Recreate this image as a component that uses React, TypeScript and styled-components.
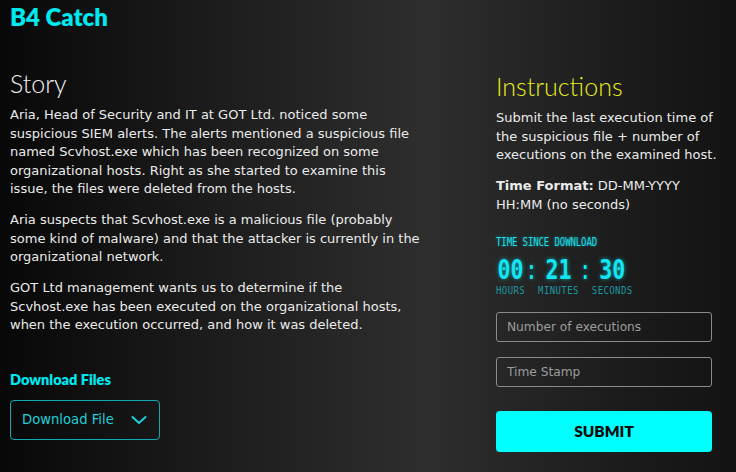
import React from "react";
import styled, { createGlobalStyle } from "styled-components";

const Global = createGlobalStyle`
  html, body { margin: 0; padding: 0; }
  body {
    width: 736px;
    height: 472px;
    overflow: hidden;
    background: linear-gradient(90deg, #080808 0%, #1b1b1b 27%, #2e2e2e 58%, #1c1c1c 84%, #131313 100%);
    font-family: "DejaVu Sans", "Open Sans", sans-serif;
    color: #ececec;
  }
`;

const Page = styled.div`
  box-sizing: border-box;
  width: 736px;
  height: 472px;
  padding: 3px 14px 0 10px;
  display: flex;
  flex-direction: column;
`;

const Title = styled.h1`
  margin: 0;
  font-family: "Lato", sans-serif;
  font-size: 24px;
  line-height: 28px;
  font-weight: 800;
  color: #00e8f0;
`;

const Columns = styled.div`
  display: grid;
  grid-template-columns: 410px 226px;
  justify-content: space-between;
`;

const Left = styled.div`
  display: flex;
  flex-direction: column;
  align-items: flex-start;
  padding-top: 37px;
`;

const Right = styled.div`
  display: flex;
  flex-direction: column;
  align-items: flex-start;
  padding-top: 40px;
`;

const Heading = styled.h2<{ $tone: "white" | "yellow" }>`
  margin: 0 0 8px;
  font-family: "Lato", sans-serif;
  font-weight: 300;
  font-size: 25px;
  line-height: 30px;
  color: ${(p) => (p.$tone === "yellow" ? "#e6ec1c" : "#f2f2f2")};
`;

const Para = styled.p`
  margin: 0 0 12.5px;
  font-family: "DejaVu Sans", sans-serif;
  font-size: 13px;
  line-height: 18.5px;
  color: #ebebeb;
`;

const Strong = styled.b`
  font-weight: 700;
`;

const DownloadLabel = styled.div`
  margin-top: 24px;
  font-family: "Lato", sans-serif;
  font-weight: 800;
  font-size: 14.5px;
  line-height: 18px;
  color: #00e8f0;
`;

const DropButton = styled.button`
  margin-top: 10.5px;
  box-sizing: border-box;
  width: 150px;
  height: 40px;
  display: flex;
  align-items: center;
  justify-content: space-between;
  padding: 0 12px 0 11px;
  background: transparent;
  border: 1px solid #14a9b2;
  border-radius: 4px;
  color: #1fd0da;
  font-family: "DejaVu Sans", sans-serif;
  font-size: 13.2px;
  white-space: nowrap;
`;

const ClockTitle = styled.div`
  margin-top: 9px;
  font-family: "DejaVu Sans Mono", monospace;
  font-size: 9px;
  line-height: 12px;
  letter-spacing: -0.1px;
  color: #1ee0ee;
  text-transform: uppercase;
  transform: scaleY(1.4);
  text-shadow: 0 0 3px rgba(0, 230, 240, 0.5);
`;

const Clock = styled.div`
  margin-top: 12.5px;
  display: flex;
  align-items: flex-start;
`;

const Unit = styled.div`
  display: flex;
  flex-direction: column;
  align-items: center;
`;

const Digits = styled.div`
  font-family: "DejaVu Sans Mono", monospace;
  font-weight: 700;
  font-size: 21.6px;
  line-height: 20px;
  height: 20px;
  color: #13e6f2;
  transform: scaleY(1.27);
  text-shadow: 0 0 4px rgba(0, 230, 240, 0.6);
`;

const Colon = styled(Digits)`
  width: 13px;
  text-align: center;
  font-weight: 400;
`;

const UnitLabel = styled.div`
  margin-top: 4.6px;
  font-family: "DejaVu Sans Mono", monospace;
  font-size: 9px;
  line-height: 10px;
  letter-spacing: 0.4px;
  color: #1c98a1;
  text-transform: uppercase;
  transform: scaleY(1.2);
`;

const Field = styled.input`
  box-sizing: border-box;
  width: 216px;
  height: 30px;
  margin: 17px 0 0;
  padding: 0 10px;
  background: transparent;
  border: 1px solid #8a8a8a;
  border-radius: 3px;
  font-family: "DejaVu Sans", sans-serif;
  font-size: 12.2px;
  color: #ddd;
  outline: none;
  &::placeholder { color: #9c9c9c; }
  & + & { margin-top: 15px; }
`;

const Submit = styled.button`
  margin-top: 24px;
  width: 216px;
  height: 41px;
  border: none;
  border-radius: 4px;
  background: #00ffff;
  color: #0a0a0a;
  font-family: "Lato", sans-serif;
  font-weight: 800;
  font-size: 15.5px;
`;

export default function App() {
  return (
    <>
      <Global />
      <Page>
        <Title>B4 Catch</Title>
        <Columns>
          <Left>
            <Heading $tone="white">Story</Heading>
            <Para>
              Aria, Head of Security and IT at GOT Ltd. noticed some suspicious SIEM alerts. The alerts mentioned a suspicious file named Scvhost.exe which has been recognized on some organizational hosts. Right as she started to examine this issue, the files were deleted from the hosts.
            </Para>
            <Para>
              Aria suspects that Scvhost.exe is a malicious file (probably some kind of malware) and that the attacker is currently in the organizational network.
            </Para>
            <Para>
              GOT Ltd management wants us to determine if the Scvhost.exe has been executed on the organizational hosts, when the execution occurred, and how it was deleted.
            </Para>
            <DownloadLabel>Download Files</DownloadLabel>
            <DropButton>
              Download File
              <svg width="16" height="10" viewBox="0 0 16 10" fill="none">
                <path d="M1.5 2l6.5 6 6.5-6" stroke="#1fd0da" strokeWidth="2" strokeLinecap="round" strokeLinejoin="round" />
              </svg>
            </DropButton>
          </Left>
          <Right>
            <Heading $tone="yellow">Instructions</Heading>
            <Para>
              Submit the last execution time of the suspicious file + number of executions on the examined host.
            </Para>
            <Para>
              <Strong>Time Format:</Strong> DD-MM-YYYY HH:MM (no seconds)
            </Para>
            <ClockTitle>Time since download</ClockTitle>
            <Clock>
              <Unit>
                <Digits>00</Digits>
                <UnitLabel>Hours</UnitLabel>
              </Unit>
              <Colon>:</Colon>
              <Unit>
                <Digits>21</Digits>
                <UnitLabel>Minutes</UnitLabel>
              </Unit>
              <Colon>:</Colon>
              <Unit>
                <Digits>30</Digits>
                <UnitLabel>Seconds</UnitLabel>
              </Unit>
            </Clock>
            <Field placeholder="Number of executions" />
            <Field placeholder="Time Stamp" />
            <Submit>SUBMIT</Submit>
          </Right>
        </Columns>
      </Page>
    </>
  );
}
